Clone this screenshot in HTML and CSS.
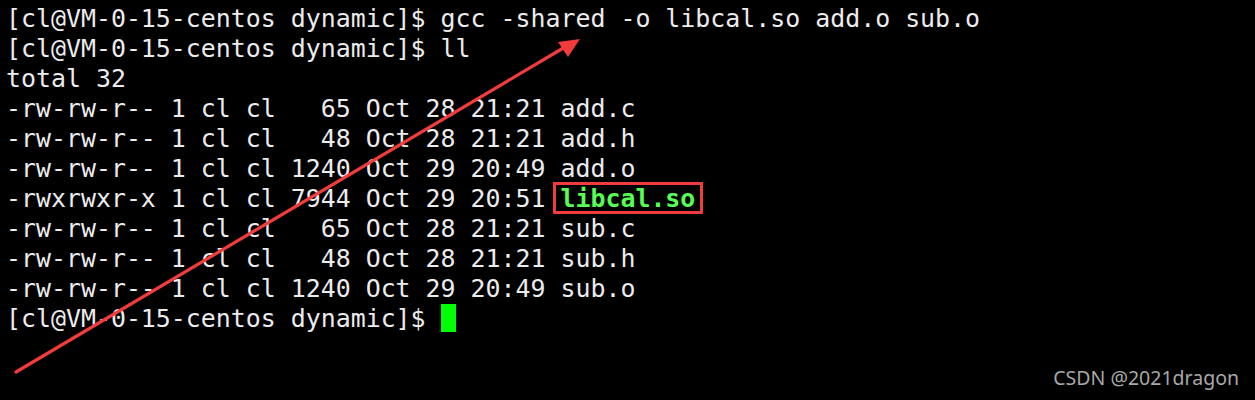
FILE: index.html
```html
<!DOCTYPE html>
<html>
<head>
<meta charset="utf-8">
<link rel="stylesheet" href="styles.css">
</head>
<body>
<div class="term">
<pre class="out">[cl@VM-0-15-centos dynamic]$ gcc -shared -o libcal.so add.o sub.o
[cl@VM-0-15-centos dynamic]$ ll
total 32
-rw-rw-r-- 1 cl cl   65 Oct 28 21:21 add.c
-rw-rw-r-- 1 cl cl   48 Oct 28 21:21 add.h
-rw-rw-r-- 1 cl cl 1240 Oct 29 20:49 add.o
-rwxrwxr-x 1 cl cl 7944 Oct 29 20:51 <span class="exe">libcal.so</span>
-rw-rw-r-- 1 cl cl   65 Oct 28 21:21 sub.c
-rw-rw-r-- 1 cl cl   48 Oct 28 21:21 sub.h
-rw-rw-r-- 1 cl cl 1240 Oct 29 20:49 sub.o
[cl@VM-0-15-centos dynamic]$ <span class="cursor"> </span></pre>
<svg class="arrow" width="1255" height="400" viewBox="0 0 1255 400">
<line x1="16" y1="372" x2="565" y2="47" stroke="#f23c3c" stroke-width="3.2" stroke-linecap="round"/>
<polygon points="580,39 558,42 568,57" fill="#f23c3c"/>
</svg>
<div class="mark">CSDN @2021dragon</div>
</div>
</body>
</html>
```
FILE: styles.css
```css
html, body {
  margin: 0;
  padding: 0;
  background: #000;
}
.term {
  position: relative;
  width: 1255px;
  height: 400px;
  background: #000;
  overflow: hidden;
}
.out {
  margin: 0;
  padding: 4px 6px;
  font-family: "DejaVu Sans Mono", monospace;
  font-size: 24.9px;
  line-height: 30px;
  color: #ececec;
}
.exe {
  position: relative;
  color: #55ff55;
  font-weight: bold;
}
.exe::after {
  content: "";
  position: absolute;
  left: -7px;
  right: -8px;
  top: -2px;
  bottom: -1px;
  border: 3px solid #f03c3c;
}
.cursor {
  display: inline-block;
  width: 15px;
  height: 28px;
  background: #00ff00;
  vertical-align: top;
}
.arrow {
  position: absolute;
  left: 0;
  top: 0;
}
.mark {
  position: absolute;
  right: 16px;
  bottom: 9px;
  font-family: "Noto Sans", "Open Sans", sans-serif;
  font-size: 19.5px;
  color: #a8a8a8;
}
```
